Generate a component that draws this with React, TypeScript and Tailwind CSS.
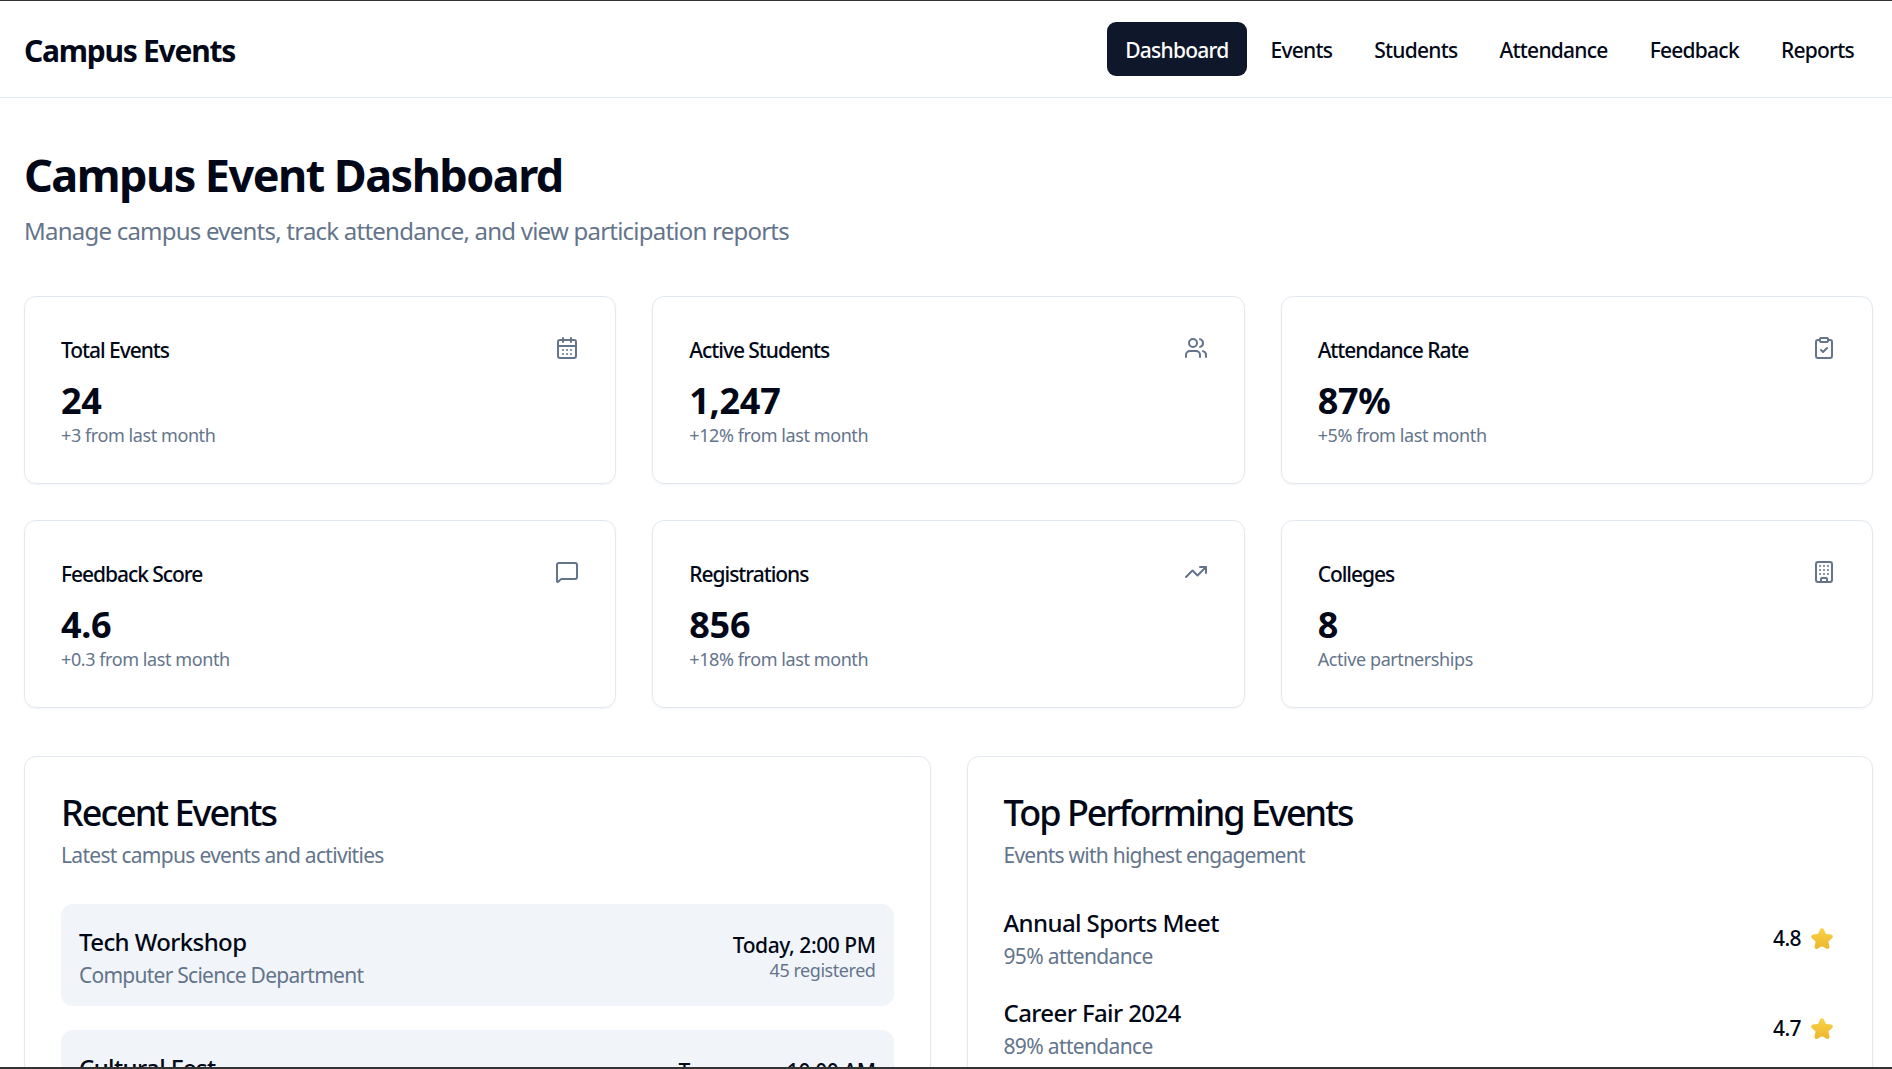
import { Building, CalendarDays, ClipboardCheck, MessageSquare, TrendingUp, Users } from "lucide-react";

const navItems = ["Dashboard", "Events", "Students", "Attendance", "Feedback", "Reports"];

const stats = [
  { title: "Total Events", value: "24", note: "+3 from last month", icon: CalendarDays },
  { title: "Active Students", value: "1,247", note: "+12% from last month", icon: Users },
  { title: "Attendance Rate", value: "87%", note: "+5% from last month", icon: ClipboardCheck },
  { title: "Feedback Score", value: "4.6", note: "+0.3 from last month", icon: MessageSquare },
  { title: "Registrations", value: "856", note: "+18% from last month", icon: TrendingUp },
  { title: "Colleges", value: "8", note: "Active partnerships", icon: Building },
];

const recent = [
  { name: "Tech Workshop", dept: "Computer Science Department", time: "Today, 2:00 PM", count: "45 registered" },
  { name: "Cultural Fest", dept: "Student Affairs", time: "Tomorrow, 10:00 AM", count: "120 registered" },
];

const top = [
  { name: "Annual Sports Meet", rate: "95% attendance", score: "4.8" },
  { name: "Career Fair 2024", rate: "89% attendance", score: "4.7" },
];

// the rounded star from the reference, a thick round stroke softens the points
function StarIcon() {
  return (
    <svg width="22" height="22" viewBox="1 1 20 20" className="mr-[3px]">
      <defs>
        <linearGradient id="star-fill" x1="0" y1="0" x2="0" y2="1">
          <stop offset="0" stopColor="#f9cf45" />
          <stop offset="1" stopColor="#edb92e" />
        </linearGradient>
      </defs>
      <path
        d="M11 3 L13.4 8.1 L19 8.8 L14.9 12.6 L16 18.2 L11 15.4 L6 18.2 L7.1 12.6 L3 8.8 L8.6 8.1 Z"
        fill="url(#star-fill)"
        stroke="url(#star-fill)"
        strokeWidth="3.6"
        strokeLinejoin="round"
      />
    </svg>
  );
}

export default function App() {
  return (
    <div className="h-[1069px] overflow-hidden border-t border-b-2 border-[#333333] bg-white font-['Noto_Sans',sans-serif] text-[#020817]">
      <header className="flex h-[97px] items-center justify-between border-b border-[#e2e8f0] pl-6 pr-[20px]">
        <span className="pt-[3px] text-[30px] font-bold leading-none tracking-[-1.25px]">Campus Events</span>
        <nav className="flex items-center gap-[6px]">
          {navItems.map((item, index) => (
            <a
              key={item}
              href="#"
              className={
                index === 0
                  ? "flex h-[54px] items-center rounded-[9px] bg-[#0f172a] px-[18px] pt-[3px] text-[21px] font-medium tracking-[-0.75px] text-white"
                  : "flex h-[54px] items-center rounded-[9px] px-[18px] pt-[3px] text-[21px] font-medium tracking-[-0.75px]"
              }
            >
              {item}
            </a>
          ))}
        </nav>
      </header>

      <main className="pl-6 pr-[19px] pt-[50px]">
        <h1 className="text-[45px] font-bold leading-[54px] tracking-[-1.55px]">Campus Event Dashboard</h1>
        <p className="mt-[11px] text-[24px] leading-[36px] tracking-[-0.77px] text-[#64748b]">
          Manage campus events, track attendance, and view participation reports
        </p>

        <div className="mt-[47px] grid grid-cols-3 gap-9">
          {stats.map(({ title, value, note, icon: Icon }) => (
            <div key={title} className="h-[188px] rounded-[12px] border border-[#e2e8f0] p-9 shadow-xs">
              <div className="flex h-[30px] items-center justify-between">
                <span className="pt-[4px] text-[21px] font-medium leading-[30px] tracking-[-1.05px]">{title}</span>
                <Icon size={24} strokeWidth={2} className="text-[#64748b]" />
              </div>
              <div className="mt-[17px] text-[36px] font-bold leading-[42px] tracking-[-0.3px]">{value}</div>
              <div className="mt-px text-[18px] leading-[24px] tracking-[-0.42px] text-[#64748b]">{note}</div>
            </div>
          ))}
        </div>

        <div className="mt-12 grid grid-cols-2 gap-9">
          <div className="rounded-[12px] border border-[#e2e8f0] px-9 pb-9 pt-[38px] shadow-xs">
            <h2 className="text-[36px] font-medium leading-[36px] tracking-[-2px]">Recent Events</h2>
            <p className="mt-[9px] text-[21px] leading-[30px] tracking-[-0.7px] text-[#64748b]">Latest campus events and activities</p>
            <div className="mt-[34px] flex flex-col gap-6">
              {recent.map((e) => (
                <div key={e.name} className="flex h-[102px] items-center justify-between rounded-[12px] bg-[#f1f5f9] px-[18px]">
                  <div className="pt-[3px]">
                    <div className="text-[24px] font-medium leading-[36px] tracking-[-0.6px]">{e.name}</div>
                    <div className="text-[21px] leading-[30px] tracking-[-0.75px] text-[#64748b]">{e.dept}</div>
                  </div>
                  <div className="pt-[2px] text-right">
                    <div className="text-[21px] font-medium leading-[30px] tracking-[-0.45px]">{e.time}</div>
                    <div className="-mt-[2px] text-[18px] leading-[24px] tracking-[-0.45px] text-[#64748b]">{e.count}</div>
                  </div>
                </div>
              ))}
            </div>
          </div>

          <div className="rounded-[12px] border border-[#e2e8f0] px-9 pb-9 pt-[38px] shadow-xs">
            <h2 className="text-[36px] font-medium leading-[36px] tracking-[-2px]">Top Performing Events</h2>
            <p className="mt-[9px] text-[21px] leading-[30px] tracking-[-0.75px] text-[#64748b]">Events with highest engagement</p>
            <div className="mt-[35px] flex flex-col gap-6">
              {top.map((e) => (
                <div key={e.name} className="flex items-center justify-between">
                  <div>
                    <div className="text-[24px] font-medium leading-[36px] tracking-[-0.6px]">{e.name}</div>
                    <div className="text-[21px] leading-[30px] tracking-[-0.65px] text-[#64748b]">{e.rate}</div>
                  </div>
                  <div className="flex items-center gap-[10px] pt-[2px]">
                    <span className="text-[21px] font-medium tracking-[-0.6px]">{e.score}</span>
                    <StarIcon />
                  </div>
                </div>
              ))}
            </div>
          </div>
        </div>
      </main>
    </div>
  );
}
